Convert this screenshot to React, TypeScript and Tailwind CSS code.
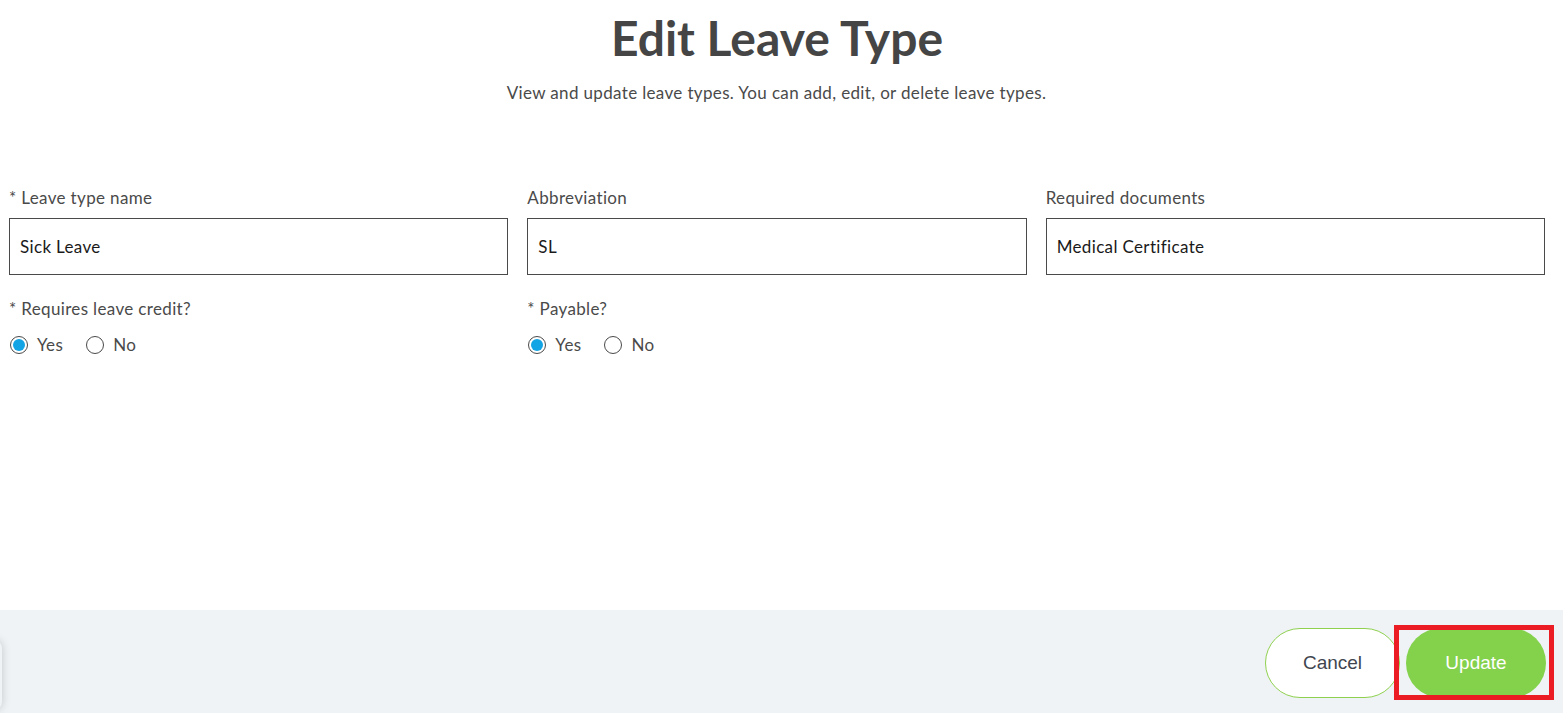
import React, { useState } from 'react';

const font = { fontFamily: 'Lato, "Open Sans", sans-serif' };
const arial = { fontFamily: '"Liberation Sans", Arial, sans-serif' };

function Radio({ checked, label, onClick }: { checked: boolean; label: string; onClick: () => void }) {
    return (
        <button type="button" onClick={onClick} className="flex items-center gap-[9px] text-[17px] tracking-[0.35px] text-[#4a4a4a]">
            <span className="w-[18px] h-[18px] rounded-full border border-[#4a4a4a] bg-white flex items-center justify-center">
                {checked && <span className="w-[12px] h-[12px] rounded-full bg-[#12a4e4]" />}
            </span>
            <span>{label}</span>
        </button>
    );
}

function Field({ label, value }: { label: string; value: string }) {
    return (
        <div className="flex flex-col">
            <label className="text-[17px] tracking-[0.35px] text-[#4a4a4a] leading-[20px] mb-[10px]">{label}</label>
            <input
                defaultValue={value}
                className="h-[57px] border border-[#4a4a4a] px-[10px] text-[17px] tracking-[0.35px] text-[#1a1a1a] outline-none"
            />
        </div>
    );
}

export default function App() {
    const [credit, setCredit] = useState(true);
    const [payable, setPayable] = useState(true);

    return (
        <div className="w-full h-[713px] bg-white flex flex-col relative overflow-hidden" style={font}>
            <div className="flex-1">
                <div className="h-[188px] flex flex-col items-center pt-[9px]">
                    <h1 className="text-[48px] font-bold text-[#454545] leading-[58px] -ml-[9px]">Edit Leave Type</h1>
                    <p className="mt-[15px] text-[17px] tracking-[0.35px] leading-[22px] text-[#4a4a4a] -ml-[10px]">
                        View and update leave types. You can add, edit, or delete leave types.
                    </p>
                </div>

                <div className="grid grid-cols-3 gap-x-[19px] pl-[9px] pr-[18px]">
                    <Field label="* Leave type name" value="Sick Leave" />
                    <Field label="Abbreviation" value="SL" />
                    <Field label="Required documents" value="Medical Certificate" />
                </div>

                <div className="grid grid-cols-3 gap-x-[19px] pl-[9px] pr-[18px] mt-[24px]">
                    <div className="flex flex-col">
                        <span className="text-[17px] tracking-[0.35px] text-[#4a4a4a] leading-[20px]">* Requires leave credit?</span>
                        <div className="flex gap-[23px] mt-[13px] pl-[1px]">
                            <Radio checked={credit} label="Yes" onClick={() => setCredit(true)} />
                            <Radio checked={!credit} label="No" onClick={() => setCredit(false)} />
                        </div>
                    </div>
                    <div className="flex flex-col">
                        <span className="text-[17px] tracking-[0.35px] text-[#4a4a4a] leading-[20px]">* Payable?</span>
                        <div className="flex gap-[23px] mt-[13px] pl-[1px]">
                            <Radio checked={payable} label="Yes" onClick={() => setPayable(true)} />
                            <Radio checked={!payable} label="No" onClick={() => setPayable(false)} />
                        </div>
                    </div>
                    <div />
                </div>
            </div>

            <div className="h-[103px] bg-[#eff3f6] flex items-start justify-end gap-[6px] pt-[18px] pr-[17px] relative">
                <div className="absolute left-[-14px] top-[30px] w-[16px] h-[70px] rounded-full shadow-[0_0_10px_rgba(0,0,0,0.18)] bg-[#eff3f6]" />
                <button
                    className="w-[135px] h-[70px] rounded-full border border-[#8fd14f] bg-white text-[19px] text-[#3f4650]"
                    style={arial}
                >
                    Cancel
                </button>
                <div className="relative">
                    <button
                        className="w-[140px] h-[70px] rounded-full bg-[#84d14b] text-[19px] text-white"
                        style={arial}
                    >
                        Update
                    </button>
                    <div className="absolute left-[-12px] right-[-8px] top-[-3px] bottom-[-2px] border-[5px] border-[#ec1c24] pointer-events-none" />
                </div>
            </div>
        </div>
    );
}
